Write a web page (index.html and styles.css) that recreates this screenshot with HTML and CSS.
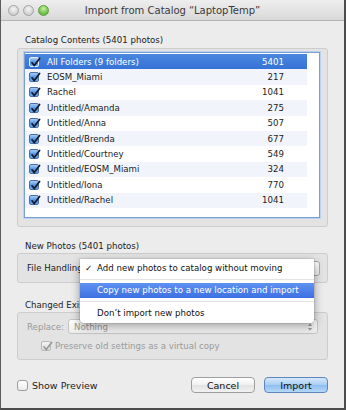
FILE: index.html
```html
<!DOCTYPE html>
<html>
<head>
<meta charset="utf-8">
<link rel="stylesheet" href="styles.css">
</head>
<body>
<div class="window">
  <div class="titlebar">
    <div class="lights">
      <span class="light"></span>
      <span class="light"></span>
      <span class="light green"></span>
    </div>
    <div class="title">Import from Catalog “LaptopTemp”</div>
    <div></div>
  </div>

  <div class="content">
    <div class="section-label">Catalog Contents (5401 photos)</div>
    <div class="group group-list">
      <div class="list">
        <div class="row selected"><span class="cb on"><svg viewBox="0 0 10 10"><path d="M2 4.8 L4.3 7.6 L9.6 0.4"/></svg></span><span class="name">All Folders (9 folders)</span><span class="count">5401</span></div>
        <div class="row odd"><span class="cb on"><svg viewBox="0 0 10 10"><path d="M2 4.8 L4.3 7.6 L9.6 0.4"/></svg></span><span class="name">EOSM_Miami</span><span class="count">217</span></div>
        <div class="row"><span class="cb on"><svg viewBox="0 0 10 10"><path d="M2 4.8 L4.3 7.6 L9.6 0.4"/></svg></span><span class="name">Rachel</span><span class="count">1041</span></div>
        <div class="row odd"><span class="cb on"><svg viewBox="0 0 10 10"><path d="M2 4.8 L4.3 7.6 L9.6 0.4"/></svg></span><span class="name">Untitled/Amanda</span><span class="count">275</span></div>
        <div class="row"><span class="cb on"><svg viewBox="0 0 10 10"><path d="M2 4.8 L4.3 7.6 L9.6 0.4"/></svg></span><span class="name">Untitled/Anna</span><span class="count">507</span></div>
        <div class="row odd"><span class="cb on"><svg viewBox="0 0 10 10"><path d="M2 4.8 L4.3 7.6 L9.6 0.4"/></svg></span><span class="name">Untitled/Brenda</span><span class="count">677</span></div>
        <div class="row"><span class="cb on"><svg viewBox="0 0 10 10"><path d="M2 4.8 L4.3 7.6 L9.6 0.4"/></svg></span><span class="name">Untitled/Courtney</span><span class="count">549</span></div>
        <div class="row odd"><span class="cb on"><svg viewBox="0 0 10 10"><path d="M2 4.8 L4.3 7.6 L9.6 0.4"/></svg></span><span class="name">Untitled/EOSM_Miami</span><span class="count">324</span></div>
        <div class="row"><span class="cb on"><svg viewBox="0 0 10 10"><path d="M2 4.8 L4.3 7.6 L9.6 0.4"/></svg></span><span class="name">Untitled/Iona</span><span class="count">770</span></div>
        <div class="row odd"><span class="cb on"><svg viewBox="0 0 10 10"><path d="M2 4.8 L4.3 7.6 L9.6 0.4"/></svg></span><span class="name">Untitled/Rachel</span><span class="count">1041</span></div>
      </div>
    </div>

    <div class="section-label label-2">New Photos (5401 photos)</div>
    <div class="group group-fh">
      <span class="fh-label">File Handling:</span>
      <div class="popup fh-popup"></div>
    </div>

    <div class="section-label label-3">Changed Existing Photos</div>
    <div class="group group-ce">
      <div class="replace-row">
        <span class="disabled-text">Replace:</span>
        <div class="popup nothing-popup">
          <span class="disabled-text">Nothing</span>
          <svg class="updown" viewBox="0 0 6 10"><path d="M0.8 4 L3 1.2 L5.2 4 Z M0.8 6 L3 8.8 L5.2 6 Z"/></svg>
        </div>
      </div>
      <div class="preserve-row">
        <span class="cb disabled"><svg viewBox="0 0 10 10"><path d="M2 4.8 L4.3 7.6 L9.6 0.4"/></svg></span>
        <span class="disabled-text">Preserve old settings as a virtual copy</span>
      </div>
    </div>

    <div class="footer">
      <span class="cb off"></span>
      <span class="preview-label">Show Preview</span>
      <div class="buttons">
        <button class="btn cancel">Cancel</button>
        <button class="btn import">Import</button>
      </div>
    </div>
  </div>

  <div class="menu">
    <div class="menu-item"><span class="mark">✓</span>Add new photos to catalog without moving</div>
    <div class="menu-sep"></div>
    <div class="menu-item hl">Copy new photos to a new location and import</div>
    <div class="menu-sep"></div>
    <div class="menu-item">Don’t import new photos</div>
  </div>
</div>
</body>
</html>
```

FILE: styles.css
```css
* { box-sizing: border-box; }

html, body {
  margin: 0;
  padding: 0;
}

body {
  width: 346px;
  height: 410px;
  overflow: hidden;
  background: #4a4a4a;
  font-family: "DejaVu Sans", "Noto Sans", sans-serif;
  font-size: 8.65px;
  color: #1c1c1c;
}

.window {
  position: relative;
  width: 346px;
  height: 410px;
  background: #ececec;
  border-left: 1px solid #5c5c5c;
  border-right: 2px solid #4c4c4c;
  border-bottom: 2px solid #4c4c4c;
}

/* title bar */
.titlebar {
  height: 21px;
  display: grid;
  grid-template-columns: 1fr auto 1fr;
  align-items: center;
  background: linear-gradient(#eeeeee, #d9d9d9);
  border-bottom: 1px solid #b4b4b4;
}

.lights {
  display: flex;
  gap: 4px;
  padding-left: 7px;
  padding-top: 1px;
}

.light {
  width: 11px;
  height: 11px;
  border-radius: 50%;
  background: radial-gradient(circle at 50% 35%, #f6f6f6, #cfcfcf 70%);
  border: 1px solid #a4a4a4;
}

.light.green {
  background: radial-gradient(circle at 50% 30%, #c8f0a0, #6cbf4a 65%);
  border-color: #5c9a40;
}

.title {
  font-size: 10px;
  color: #3a3a3a;
  padding-top: 1px;
}

/* content */
.content {
  padding: 0 16px 0 16px;
}

.section-label {
  margin-top: 13px;
  line-height: 12px;
  height: 12px;
  padding-left: 8px;
  color: #222;
  white-space: nowrap;
}

.group {
  background: #e3e3e3;
  border: 1px solid #cdcdcd;
  border-radius: 3px;
}

.group-list {
  margin-top: 2px;
  padding: 3px 7px 8px 6px;
}

.list {
  height: 166px;
  background: #fff;
  border: 1px solid #79a0d4;
  box-shadow: 0 0 0 1px #b9d0ef;
  padding-top: 1px;
}

.row {
  height: 15.4px;
  margin-right: 12px;
  display: flex;
  align-items: center;
  padding-left: 4px;
  padding-right: 23px;
}

.row.odd { background: #f1f5fb; }

.row.selected {
  background: linear-gradient(#4c87e0, #3472d6);
  color: #fff;
}

.row .name {
  margin-left: 8px;
  flex: 1;
}

.row .count { text-align: right; }

/* checkboxes */
.cb {
  position: relative;
  display: inline-block;
  flex: none;
  width: 10px;
  height: 10px;
  border-radius: 2px;
}

.cb svg {
  position: absolute;
  left: 0;
  top: 0;
  width: 10px;
  height: 10px;
  overflow: visible;
}

.cb svg path {
  fill: none;
  stroke: #141a2a;
  stroke-width: 1.7;
  stroke-linecap: round;
  stroke-linejoin: round;
}

.cb.on {
  background: linear-gradient(#a9cdf5, #4d8fe3 55%, #6aa8ef);
  border: 1px solid #4a6fa8;
}

.row.selected .cb.on { border-color: #e6eefc; }

.cb.disabled {
  background: linear-gradient(#f4f4f4, #dcdcdc);
  border: 1px solid #b8b8b8;
}

.cb.disabled svg path { stroke: #9a9a9a; }

.cb.off {
  width: 11px;
  height: 11px;
  background: linear-gradient(#ffffff, #ececec);
  border: 1px solid #9c9c9c;
  border-radius: 3px;
}

/* file handling */
.label-2 { margin-top: 13px; }

.group-fh {
  margin-top: 1px;
  height: 30px;
  display: flex;
  align-items: center;
  padding-left: 9px;
  padding-right: 7px;
}

.fh-label {
  flex: none;
  white-space: nowrap;
}

.popup {
  height: 15px;
  border: 1px solid #a9a9a9;
  border-radius: 3px;
  background: linear-gradient(#ffffff, #ececec);
}

.fh-popup {
  flex: 1;
  margin-left: 4px;
}

/* changed existing */
.label-3 { margin-top: 16px; }

.group-ce {
  margin-top: 1px;
  height: 48px;
  padding: 6px 9px 0 9px;
}

.disabled-text {
  color: #9a9a9a;
  white-space: nowrap;
}

.replace-row {
  display: flex;
  align-items: center;
  height: 15px;
  gap: 4px;
}

.nothing-popup {
  flex: 1;
  display: flex;
  align-items: center;
  justify-content: space-between;
  padding: 0 4px 0 5px;
  border-color: #c4c4c4;
}

.updown {
  width: 6px;
  height: 10px;
}

.updown path { fill: #a0a0a0; }

.preserve-row {
  margin-top: 6px;
  margin-left: 14px;
  height: 12px;
  display: flex;
  align-items: center;
  gap: 4px;
}

/* footer */
.footer {
  margin-top: 17px;
  height: 16px;
  display: flex;
  align-items: center;
}

.preview-label {
  margin-left: 4px;
  font-size: 9.5px;
}

.buttons {
  margin-left: auto;
  display: flex;
  gap: 9px;
}

.btn {
  width: 64px;
  height: 16px;
  padding: 0;
  font-family: "DejaVu Sans", "Noto Sans", sans-serif;
  font-size: 9.5px;
  color: #111;
  border-radius: 4px;
}

.btn.cancel {
  background: linear-gradient(#ffffff, #f0f0f0 50%, #e2e2e2 51%, #f2f2f2);
  border: 1px solid #9e9e9e;
}

.btn.import {
  background: linear-gradient(#d6e9fc, #a9cdf4 50%, #8ebef0 51%, #b5d8f8);
  border: 1px solid #5f86bd;
}

/* popup menu */
.menu {
  position: absolute;
  left: 79px;
  top: 259px;
  width: 234px;
  height: 64px;
  padding-top: 1.5px;
  background: #fff;
  border-radius: 0 0 4px 4px;
  box-shadow: 0 3px 10px rgba(0, 0, 0, 0.38), 0 0 0 1px rgba(0, 0, 0, 0.08);
}

.menu-item {
  position: relative;
  height: 15px;
  line-height: 15px;
  padding-left: 17px;
  color: #111;
  white-space: nowrap;
}

.menu-item .mark {
  position: absolute;
  left: 5px;
  top: 0;
}

.menu-item.hl {
  background: linear-gradient(#5f92f1, #3d70e2);
  color: #fff;
}

.menu-sep {
  height: 7.5px;
  position: relative;
}

.menu-sep::after {
  content: "";
  position: absolute;
  left: 0;
  right: 0;
  top: 3px;
  height: 1px;
  background: #e3e3e3;
}
```
